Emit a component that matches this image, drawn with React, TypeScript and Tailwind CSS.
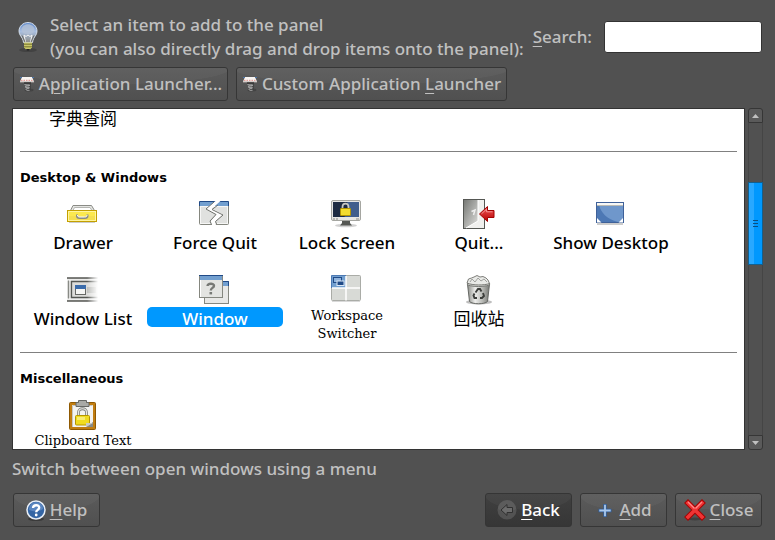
import { useState, type ReactNode } from 'react'
import clsx from 'clsx'

type Item = {
  id: string
  label: string
  icon?: ReactNode
  variant?: 'small' | 'cjk'
}

function BulbIcon() {
  return (
    <svg width="22" height="32" viewBox="0 0 22 32" fill="none">
      <defs>
        <linearGradient id="bulb" x1="0" y1="0" x2="0" y2="1">
          <stop offset="0" stopColor="#5f88c8" />
          <stop offset="0.45" stopColor="#a9bfe0" />
          <stop offset="1" stopColor="#8d8d88" />
        </linearGradient>
      </defs>
      <ellipse cx="11" cy="29" rx="9" ry="2" fill="#333" opacity="0.5" />
      <path d="M11 1.5c-5 0-9 3.8-9 8.6 0 3.300 2 5 3.300 7.400.8 1.500 1 2.800 1.200 4h9c.2-1.200.4-2.500 1.200-4C18 15.100 20 13.400 20 10.100 20 5.300 16 1.500 11 1.500Z" fill="url(#bulb)" stroke="#dbe5f3" strokeWidth="0.9" />
      <path d="M4.500 9c0-3.500 3-5.800 6.500-5.800S17.500 5.500 17.500 9c-.5 3-3.500 4.300-6.500 4.300S5 12 4.500 9Z" fill="#b4c2d6" opacity="0.8" />
      <path d="m8.500 21-1.500-7 2 1.500 2-1.500 2 1.500 2-1.500-1.500 7" stroke="#f3f3f3" strokeWidth="1" />
      <path d="M5 14.500 8 21M17 14.500 14 21" stroke="#6b6b68" strokeWidth="1" />
      <path d="M7 21.500h8v5l-2 2H9l-2-2Z" fill="#c9c76a" />
      <path d="M7 23.200h8M7 25.800h8" stroke="#77752f" strokeWidth="1" />
      <path d="M9 28h4l-1 1.500h-2Z" fill="#222" />
    </svg>
  )
}

function SpringIcon() {
  return (
    <svg width="16" height="16" viewBox="0 0 16 16" fill="none">
      <path d="M3 1h10l2 4.500H1Z" fill="#f7f4f2" />
      <path d="M2 4.300h12" stroke="#e08c86" strokeWidth="1" strokeDasharray="1.500 1" />
      <path d="M1 5.800h14" stroke="#e9dedb" strokeWidth="1" />
      <path d="M1 1.500h2M13 1.500h2" stroke="#4b74a8" />
      <path d="M5 7h7" stroke="#2a2a2a" strokeWidth="1.200" />
      <ellipse cx="10" cy="14" rx="4.500" ry="1.500" fill="#333" opacity="0.5" />
      <path d="M11 7.500v6" stroke="#3a3a3a" strokeWidth="1.200" />
      <path d="M5.500 8.500c1.500 1 5.500 0 5.500.8s-5 .2-5 1.500 4.500 0 4.500 1-3.500.3-3.500 1.500 2 1.200 3.500 1" stroke="#b5b5b5" strokeWidth="0.900" />
    </svg>
  )
}

function DrawerIcon() {
  return (
    <svg width="32" height="32" viewBox="1 1 32 32" fill="none">
      <path d="M4.500 12.500 7 7.500h18.500l3 5Z" fill="#e3e4e1" stroke="#8a8b86" />
      <path d="M8.500 9.500h15.500l2 3H7Z" fill="#fff" stroke="#b5b6b2" />
      <rect x="1.500" y="12.500" width="29" height="11" fill="#fce94f" stroke="#c4a000" />
      <path d="M2 18h28v5H2Z" fill="#f5df50" />
      <rect x="2.500" y="13.500" width="27" height="9" stroke="#fff5a0" />
      <path d="M11 16.500V18c0 1.500 1 2 2.500 2h5.500c1.500 0 2.500-.5 2.500-2v-1.500" stroke="#8a8b86" strokeWidth="2" />
      <path d="M11.500 17c0 1.800 1 2 2.500 2h4.500c1.500 0 2.500-.2 2.500-2" stroke="#fff" strokeWidth="1" />
      <path d="M3 24.500h26" stroke="#000" opacity="0.200" />
    </svg>
  )
}

function ForceQuitIcon() {
  return (
    <svg width="32" height="32" viewBox="1 1 32 32" fill="none">
      <rect x="1.500" y="3.500" width="29" height="23" rx="1" fill="#e0e1df" stroke="#85877f" />
      <path d="M2 4h28v4H2Z" fill="#729fcf" />
      <path d="M1.500 8V3.500h29V8" stroke="#204a87" />
      <rect x="2.500" y="8.500" width="27" height="17" stroke="#f6f6f5" />
      <path d="m17.500 3-10 8 11 5.500-6 7 1.500 3.500h4l-1-3.500 8-7-11-6 8.500-7.500Z" fill="#fff" />
      <path d="m16 4-8 7 10 5.500-6 6.500 1.500 3.500M20 7l-6 4.500L25 17l-7.500 6.500L18.500 26" stroke="#6f716c" />
    </svg>
  )
}

function LockScreenIcon() {
  return (
    <svg width="32" height="32" viewBox="1 1 32 32" fill="none">
      <ellipse cx="16" cy="27.500" rx="11" ry="1.800" fill="#000" opacity="0.180" />
      <path d="M12 22h8v3l2 2.500H10l2-2.500Z" fill="#555753" />
      <rect x="1.500" y="2.500" width="29" height="20" rx="1.500" fill="#e6e6e3" stroke="#a5a6a1" />
      <rect x="3" y="4" width="26" height="15" fill="#1d2b42" />
      <path d="M17 4h12v15H14c6-4 7-8 3-15Z" fill="#3f5d8c" />
      <path d="M12.500 11V9c0-4.500 6-4.500 6 0v2" stroke="#c6c7c3" strokeWidth="1.800" />
      <rect x="10.500" y="10.500" width="10" height="7" rx="0.500" fill="#f3dc2e" stroke="#b59600" />
      <path d="M3 21h2M6 21h2M26 21h3" stroke="#8a8b86" />
    </svg>
  )
}

function QuitIcon() {
  return (
    <svg width="32" height="32" viewBox="1 1 32 32" fill="none">
      <defs>
        <linearGradient id="door" x1="0" y1="0" x2="1" y2="1">
          <stop offset="0" stopColor="#777975" />
          <stop offset="1" stopColor="#e0e0de" />
        </linearGradient>
        <linearGradient id="arrow" x1="0" y1="0" x2="0" y2="1">
          <stop offset="0" stopColor="#ef5a5a" />
          <stop offset="1" stopColor="#b80000" />
        </linearGradient>
      </defs>
      <rect x="1.500" y="1.500" width="21" height="29" fill="#f0f0ee" stroke="#555753" />
      <path d="M2 2h14v21L4 30H2Z" fill="url(#door)" />
      <path d="M16 2v21L4 30" stroke="#fff" />
      <path d="M9.500 13.500 13 12l-1.500 5" stroke="#eee" strokeWidth="1.500" />
      <path d="m17.500 16 8-7.500V12.500h6.500v7h-6.500v4Z" fill="url(#arrow)" stroke="#a40000" />
      <path d="m19.500 15.800 5-4.500v2.500h6" stroke="#f79a9a" strokeWidth="0.900" />
    </svg>
  )
}

function ShowDesktopIcon() {
  return (
    <svg width="32" height="32" viewBox="1 1 32 32" fill="none">
      <path d="M3 26h26" stroke="#000" strokeWidth="2" opacity="0.200" />
      <rect x="2.500" y="4.500" width="27" height="20" fill="#6f97cb" stroke="#3f6199" />
      <path d="M3 7v17h21C13 21 7 15 5 7Z" fill="#4d78b4" />
      <path d="M3 5h26v2H3Z" fill="#f7f7f5" />
      <path d="M3 7.500h26" stroke="#b9bab5" />
      <path d="M3 20v4.500h4.500ZM29 20v4.500h-4.500Z" fill="#fff" />
    </svg>
  )
}

function WindowListIcon() {
  return (
    <svg width="32" height="32" viewBox="1 1 32 32" fill="none">
      <defs>
        <linearGradient id="fade" x1="0" y1="0" x2="1" y2="0">
          <stop offset="0.300" stopColor="#fff" stopOpacity="0" />
          <stop offset="0.950" stopColor="#fff" />
        </linearGradient>
      </defs>
      <rect x="1" y="4" width="31" height="23" fill="#dcdcda" />
      <path d="M1 4h31M1 27h31" stroke="#555753" strokeWidth="1.500" />
      <path d="M1 6h31M1 25h31" stroke="#fff" />
      <path d="M2.500 6.500v18" stroke="#888a85" />
      <path d="M32 7.500H5.500v16H32" stroke="#555753" strokeWidth="1.300" />
      <path d="M21 13h9v6h-9Z" fill="#bfc0bd" />
      <rect x="9.500" y="11.500" width="10" height="9" fill="#f6f6f4" stroke="#666864" />
      <path d="M9 11h11v4H9Z" fill="#3b6cab" />
      <path d="M16 2h17v27H16Z" fill="url(#fade)" />
    </svg>
  )
}

function WindowMenuIcon() {
  return (
    <svg width="32" height="32" viewBox="1 1 32 32" fill="none">
      <rect x="6.500" y="7.500" width="24" height="22" fill="#e8e8e6" stroke="#85877f" />
      <path d="M24 8h6v4h-6Z" fill="#729fcf" />
      <path d="M24 7.500h6.500V12" stroke="#204a87" />
      <rect x="1.500" y="1.500" width="23" height="22" fill="#e3e4e1" stroke="#85877f" />
      <path d="M2 2h22v4H2Z" fill="#729fcf" />
      <path d="M1 1.500h24" stroke="#204a87" />
      <path d="M2.500 6v17" stroke="#fff" />
      <path d="M9.500 12c.3-3 6.500-3 6.500-.3 0 2.300-3.200 2.100-3.200 4.800" stroke="#777975" strokeWidth="2.400" />
      <path d="M11.500 18h2.600v2.400h-2.600Z" fill="#777975" />
    </svg>
  )
}

function WorkspaceIcon() {
  return (
    <svg width="32" height="32" viewBox="1 1 32 32" fill="none">
      <rect x="1.500" y="1.500" width="29" height="25" rx="1" fill="#d8dad6" stroke="#aaaca7" />
      <path d="M2 2h14v12H2Z" fill="#729fcf" />
      <path d="M1.500 14V1.500H16" stroke="#4c79b3" />
      <path d="M16 2v24.500M2 14h28" stroke="#fff" strokeWidth="1.500" />
      <rect x="3.500" y="3.500" width="8" height="5" fill="#8fb3dc" stroke="#204a87" />
      <rect x="7" y="7" width="7" height="4.500" fill="#204a87" stroke="#dbe7f5" />
      <path d="M2 27.500h28" stroke="#000" opacity="0.150" />
    </svg>
  )
}

function TrashIcon() {
  return (
    <svg width="32" height="32" viewBox="1 1 32 32" fill="none">
      <defs>
        <linearGradient id="bin" x1="0" y1="0" x2="1" y2="0">
          <stop offset="0" stopColor="#8b8d88" />
          <stop offset="0.350" stopColor="#eeeeec" />
          <stop offset="0.700" stopColor="#b5b6b2" />
          <stop offset="1" stopColor="#777975" />
        </linearGradient>
      </defs>
      <ellipse cx="17" cy="28" rx="13" ry="2.500" fill="#000" opacity="0.250" />
      <path d="M5.500 10h22l-2 17.500c-3 3-15 3-18 0Z" fill="url(#bin)" stroke="#666864" />
      <ellipse cx="16.500" cy="10" rx="11.500" ry="2.500" fill="#d3d4d1" stroke="#777975" />
      <path d="m5 9 1.500-4 3-1L12 3l3-1.500L18 3l3-.5 3 1.500 2 2 1.500 3.500c-5 2-17 2-22.500-.5Z" fill="#e9eae7" stroke="#6f716c" strokeWidth="0.900" />
      <path d="m8 8 2-3 3 3 3-4 3 3 3-2 3 3" stroke="#9a9b97" strokeWidth="0.900" />
      <path d="m13.500 18.500 2.500-3.500h2l1.500 2.500M21 19l1 3-2 2h-2M15 24h-2.500l-1-2.500 1-2" stroke="#3c3e3b" strokeWidth="1.900" />
    </svg>
  )
}

function ClipboardIcon() {
  return (
    <svg width="32" height="32" viewBox="0 1 32 32" fill="none">
      <rect x="2.500" y="3.500" width="26" height="27" rx="1" fill="#c17d11" stroke="#8f5902" />
      <path d="M5 6h21v22H5Z" fill="#f3f3f1" />
      <path d="M5.500 28V6.500h20" stroke="#c5c6c2" />
      <path d="M9 3.500h2.500V1.500h8v2H22v4H9Z" fill="#a9aaa6" stroke="#666864" />
      <path d="M11.500 17v-3.500c0-5 8-5 8 0V17" stroke="#7e807b" strokeWidth="2.800" />
      <path d="M11.500 17v-3.500c0-5 8-5 8 0V17" stroke="#e8e8e6" strokeWidth="1.200" />
      <rect x="8.500" y="16.500" width="14" height="9.500" rx="1" fill="#f0dc20" stroke="#b59600" />
      <path d="M10 18h8v3h-8Z" fill="#fbf29a" opacity="0.700" />
      <path d="M26 23v5h-7Z" fill="#888a85" />
      <path d="M19 28v-4h7" fill="#c9cac6" />
    </svg>
  )
}

function HelpIcon() {
  return (
    <svg width="20" height="22" viewBox="0 0 20 22" fill="none">
      <ellipse cx="10" cy="20" rx="8" ry="2" fill="#222" opacity="0.500" />
      <circle cx="10" cy="11" r="9" fill="#3465a4" stroke="#e8eef6" strokeWidth="1.500" />
      <path d="M3 11c0-10 14-10 14-1-4 3-9 3-14 1Z" fill="#5b86c0" />
      <path d="M7 9c.2-3.600 6.200-3.600 6.200-.4 0 2.300-3 2.200-3 4.600" stroke="#fff" strokeWidth="2.300" />
      <circle cx="10.200" cy="16" r="1.400" fill="#fff" />
    </svg>
  )
}

function BackIcon() {
  return (
    <svg width="20" height="20" viewBox="0 0 20 20" fill="none">
      <circle cx="10" cy="10" r="9.500" fill="#535353" />
      <path d="M1 9a9 9 0 0 1 18 0c-5 3-13 3-18 0Z" fill="#5c5c5c" />
      <path d="m4 10 6-5.500v3h5.500v5H10v3Z" fill="#6c6c6c" stroke="#303030" strokeWidth="1" />
    </svg>
  )
}

function AddIcon() {
  return (
    <svg width="20" height="20" viewBox="0 0 20 20" fill="none">
      <path d="M10 4v13M3.500 10.500h13" stroke="#2f5e9e" strokeWidth="3.400" />
      <path d="M10 4.800v11.400M4.300 10.500h11.400" stroke="#a9c8ec" strokeWidth="1.800" />
    </svg>
  )
}

function CloseIcon() {
  return (
    <svg width="22" height="22" viewBox="0 0 22 22" fill="none">
      <ellipse cx="11" cy="20" rx="7" ry="1.500" fill="#222" opacity="0.400" />
      <path d="m4 4 14 14M18 4 4 18" stroke="#a40000" strokeWidth="5.500" strokeLinecap="square" />
      <path d="m4 4 14 14M18 4 4 18" stroke="#ef3434" strokeWidth="3.600" strokeLinecap="square" />
      <path d="m4 3 6.500 6.500M18 3l-6.500 6.500" stroke="#f88" strokeWidth="1.300" />
    </svg>
  )
}

const desktopItems: Item[] = [
  { id: 'drawer', label: 'Drawer', icon: <DrawerIcon /> },
  { id: 'force-quit', label: 'Force Quit', icon: <ForceQuitIcon /> },
  { id: 'lock', label: 'Lock Screen', icon: <LockScreenIcon /> },
  { id: 'quit', label: 'Quit...', icon: <QuitIcon /> },
  { id: 'desktop', label: 'Show Desktop', icon: <ShowDesktopIcon /> },
  { id: 'window-list', label: 'Window List', icon: <WindowListIcon /> },
  { id: 'window', label: 'Window', icon: <WindowMenuIcon /> },
  { id: 'workspace', label: 'Workspace Switcher', icon: <WorkspaceIcon />, variant: 'small' },
  { id: 'trash', label: '回收站', icon: <TrashIcon />, variant: 'cjk' },
]

const miscItems: Item[] = [
  { id: 'clipboard', label: 'Clipboard Text', icon: <ClipboardIcon />, variant: 'small' },
]

function PanelButton({ icon, children, active, className }: { icon: ReactNode; children: ReactNode; active?: boolean; className?: string }) {
  return (
    <button
      type="button"
      className={clsx(
        'flex h-[34px] items-center justify-center gap-1 rounded-[3px] border whitespace-nowrap',
        active
          ? 'border-[#353535] bg-[radial-gradient(ellipse_52%_50%_at_50%_0,rgba(255,255,255,0.03)_98%,transparent),linear-gradient(#404040,#363636)] text-white'
          : 'border-[#363636] bg-[radial-gradient(ellipse_52%_50%_at_50%_0,rgba(255,255,255,0.03)_98%,transparent),linear-gradient(#5b5b5b,#505050)]',
        className,
      )}
    >
      {icon}
      <span>{children}</span>
    </button>
  )
}

function Key({ children }: { children: ReactNode }) {
  return <span className="underline decoration-1 underline-offset-3">{children}</span>
}

function ItemGrid({ items, selected, onSelect }: { items: Item[]; selected: string; onSelect: (id: string) => void }) {
  return (
    <div className="grid grid-cols-[repeat(auto-fill,132px)] gap-y-5 px-1">
      {items.map((item) => (
        <button
          key={item.id}
          type="button"
          aria-pressed={item.id === selected}
          onClick={() => onSelect(item.id)}
          className="flex flex-col items-center justify-start"
        >
          {item.icon}
          <span
            className={clsx(
              '-mx-0.5 self-stretch rounded-[5px]',
              item.variant === 'small'
                ? 'px-4 font-["DejaVu_Serif",serif] text-[13px] leading-[18px]'
                : 'text-[17px] leading-6 whitespace-nowrap',
              item.variant === 'cjk' ? 'font-normal' : 'font-medium',
              item.id === selected && 'h-5 bg-[#0098fe] text-white',
            )}
          >
            {item.label}
          </span>
        </button>
      ))}
    </div>
  )
}

function Section({ title, children }: { title: string; children: ReactNode }) {
  return (
    <section>
      <hr className="mx-[7px] border-[#808080]" />
      <h2 className="mt-4 mb-[11px] px-[7px] font-['DejaVu_Sans',sans-serif] text-[13px] leading-5 font-bold">{title}</h2>
      {children}
    </section>
  )
}

function ScrollBar() {
  return (
    <div className="flex w-[15px] shrink-0 flex-col">
      <button type="button" aria-label="Scroll up" className="flex h-[15px] items-center justify-center rounded-t-[3px] border border-[#363636] bg-[#5a5a5a]">
        <svg width="7" height="4" viewBox="0 0 7 4"><path d="M0 4 3.500 0 7 4Z" fill="#c0c0c0" /></svg>
      </button>
      <div className="flex flex-1 flex-col border-x border-[#454545]">
        <div className="flex-[59]" />
        <div className="-mx-px flex flex-[82] flex-col items-center justify-center gap-0.5 border border-[#12608f] bg-linear-to-r from-[#28a8ff] from-40% to-[#0098fe] to-40%">
          <span className="h-px w-[5px] bg-[#0b4f80]" />
          <span className="h-px w-[5px] bg-[#0b4f80]" />
          <span className="h-px w-[5px] bg-[#0b4f80]" />
        </div>
        <div className="flex-[171]" />
      </div>
      <button type="button" aria-label="Scroll down" className="flex h-[15px] items-center justify-center rounded-b-[3px] border border-[#363636] bg-[#5a5a5a]">
        <svg width="7" height="4" viewBox="0 0 7 4"><path d="M0 0h7L3.500 4Z" fill="#c0c0c0" /></svg>
      </button>
    </div>
  )
}

export default function App() {
  const [selected, setSelected] = useState('window')

  return (
    <main className="flex h-screen flex-col bg-[#515151] px-3 py-[13px] font-['Noto_Sans','Noto_Sans_CJK_SC',sans-serif] text-[17px] leading-6 font-medium text-[#c0c0c0]">
      <header className="flex items-center pr-px">
        <div className="flex w-[38px] shrink-0 justify-start pl-[5px]"><BulbIcon /></div>
        <p className="whitespace-nowrap">
          Select an item to add to the panel
          <br />
          (you can also directly drag and drop items onto the panel):
        </p>
        <label htmlFor="search" className="ml-auto pr-3 whitespace-nowrap"><Key>S</Key>earch:</label>
        <input id="search" type="text" className="h-8 w-[158px] rounded-[3px] border border-[#333] bg-white px-2 text-black" />
      </header>

      <div className="mt-1.5 flex gap-2 px-px">
        <PanelButton icon={<SpringIcon />} className="w-[215px]">A<Key>p</Key>plication Launcher...</PanelButton>
        <PanelButton icon={<SpringIcon />} className="w-[271px]">Custom Application <Key>L</Key>auncher</PanelButton>
      </div>

      <div className="mt-[7px] flex min-h-0 flex-1 gap-[3px]">
        <div className="flex-1 overflow-hidden border border-[#333] bg-white text-black">
          <div className="mb-[22px] px-1">
            <div className="w-[132px] text-center leading-5 font-normal">字典查阅</div>
          </div>
          <Section title="Desktop & Windows">
            <ItemGrid items={desktopItems} selected={selected} onSelect={setSelected} />
          </Section>
          <div className="h-[9px]" />
          <Section title="Miscellaneous">
            <ItemGrid items={miscItems} selected={selected} onSelect={setSelected} />
          </Section>
        </div>
        <ScrollBar />
      </div>

      <p className="mt-[7px]">Switch between open windows using a menu</p>

      <footer className="mt-3 flex gap-2 px-px">
        <PanelButton icon={<HelpIcon />} className="w-[87px]"><Key>H</Key>elp</PanelButton>
        <PanelButton icon={<BackIcon />} active className="ml-auto w-[87px]"><Key>B</Key>ack</PanelButton>
        <PanelButton icon={<AddIcon />} className="w-[87px]"><Key>A</Key>dd</PanelButton>
        <PanelButton icon={<CloseIcon />} className="w-[87px]"><Key>C</Key>lose</PanelButton>
      </footer>
    </main>
  )
}
